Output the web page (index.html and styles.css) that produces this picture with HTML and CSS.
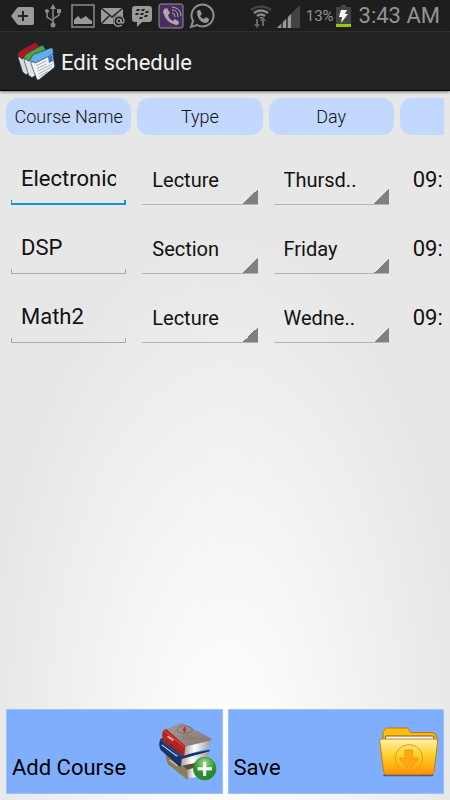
FILE: index.html
```html
<!DOCTYPE html>
<html lang="en">
<head>
    <meta charset="UTF-8">
    <meta name="viewport" content="width=device-width, initial-scale=1.0">
    <title>Edit schedule</title>
    <link rel="stylesheet" href="styles.css">
</head>
<body>
    <div class="status-bar">
        <div class="notifications">
            <svg width="24" height="24" viewBox="0 0 24 24"><path fill="#9a9a9a" d="M0 12 6 4q1-1 2-1h13q2 0 2 2v14q0 2-2 2H8q-1 0-2-1z"/><path stroke="#222" stroke-width="2" d="M7 12h10M12 7v10"/></svg>
            <svg width="16" height="24" viewBox="0 0 16 24"><g fill="none" stroke="#8a8a8a" stroke-width="1.5"><path d="M8 3v18M8 17l-6-4V8M8 15l6-4V8"/></g><g fill="#8a8a8a"><path d="m8 0 3 5H5zM12 5h4v4h-4z"/><circle cx="2" cy="7" r="2"/><circle cx="8" cy="21" r="2.5"/></g></svg>
            <svg width="24" height="24" viewBox="0 0 24 24"><path fill="none" stroke="#8a8a8a" stroke-width="1.5" d="M1 1h22v22H1z"/><path fill="#9a9a9a" d="M3 20v-4l4-4 3 3 5-3 3 3 3 2v3z"/></svg>
            <svg width="26" height="24" viewBox="0 0 26 24"><path fill="#9a9a9a" d="M1 4h22v16H1z"/><path fill="none" stroke="#222" stroke-width="1.5" d="m1 4 11 9L23 4M1 20l8-8M23 20l-8-8"/><circle cx="19" cy="17" r="6" fill="#222"/><g fill="none" stroke="#9a9a9a" stroke-width="1.3"><circle cx="19" cy="17" r="2"/><path d="M21 15v3q0 1 1 1 2 0 2-2c0-7-10-7-10 0 0 6 5 6 8 4"/></g></svg>
            <svg width="22" height="24" viewBox="0 0 22 24"><path fill="#9a9a9a" d="M4 2h14q3 0 3 3v10q0 3-3 3h-7l-5 5v-5H4q-3 0-3-3V5q0-3 3-3z"/><path fill="#222" d="M6 5h3l-1 2H5zm5 0h3l-1 2h-3zm-6 4h3l-1 2H4zm5 0h3l-1 2H9zm-1 4h3l-1 2H8zm6-6h3l-1 2h-3zm-1 4h3l-1 2h-3z"/></svg>
            <svg width="26" height="26" viewBox="0 0 26 26"><rect x="1" y="1" width="24" height="24" rx="2" fill="#4b2c61" stroke="#9a8fa0"/><path fill="#aaa" d="m6 6 3-1 3 5-2 2q1 4 5 6l2-2 4 3q0 3-3 3Q8 20 5 9z"/><path fill="none" stroke="#aaa" d="M14 10q3 0 3 4M14 7q6 0 6 7M14 4q9 1 9 9"/></svg>
            <svg width="26" height="26" viewBox="0 0 26 26"><path fill="none" stroke="#8f8f8f" stroke-width="2" d="m2 24 2-6A11 11 0 1 1 8 22z"/><path fill="#999" d="m8 8 2-1 1 0 2 4-2 2q2 3 4 3l2-2 3 2q0 4-4 4Q8 18 8 8z"/></svg>
        </div>
        <div class="system">
            <svg class="wifi" width="22" height="24" viewBox="0 0 22 24"><g fill="none" stroke-width="2.5"><path stroke="#444" d="M1 6q10-7 20 0"/><path stroke="#8a8a8a" d="M4 9q7-5 14 0M7 12q4-3 8 0"/></g><path fill="#8a8a8a" d="M9 13h4l-2 2z"/><path fill="#666" d="M6 15h2v5h2l-3 4-3-4h2zM12 22v-5h-2l3-4 3 4h-2v5z"/></svg>
            <svg width="24" height="24" viewBox="0 0 24 24"><path fill="#444" d="M0 24 23 1v23z"/><path fill="#999" d="m0 24 4-4v4zM6 18l3-3v9H6zM11 13l3-3v14h-3z"/></svg>
            <span class="percent">13%</span>
            <svg width="15" height="24" viewBox="0 0 15 24"><path fill="#444" d="M0 3h5V1h5v2h5v17H0z"/><path fill="#90d000" d="M0 20h15v3H0z"/><path fill="#fff" d="M5 6h6l-2 4h3l-7 9 1-6H3z"/></svg>
            <span class="clock">3:43 AM</span>
        </div>
    </div>

    <header class="action-bar">
        <svg width="40" height="40" viewBox="18 21 120 120">
            <g stroke="#1d3a5c" stroke-width="2">
                <path fill="#dcdcdc" d="m24 70 48-30 22 55-46 27-10-8z"/>
                <path fill="#b4151c" d="m21 64 8-12 44-25q6-2 8 2l8 11-53 36q-6-8-15-12z"/>
                <path fill="#e4e4e4" d="m42 78 48-34 22 55-46 32-10-7z"/>
                <path fill="#4fa23c" d="m40 72 8-12 45-25q6-2 8 2l6 10-52 35q-6-8-15-10z"/>
                <path fill="#f2f4f6" d="m62 86 66-28 6 38q0 4-4 7l-43 34q-4 2-7-2z"/>
                <path fill="#5fb0ea" d="m58 80 10-16q2-3 6-4l48-18q6-1 7 4l1 14-54 27q-8-5-18-7z"/>
            </g>
            <path fill="#3878c4" d="m114 69 13-5 2 17-12 6z"/>
            <path stroke="#a5a9ad" stroke-width="3" d="m78 95 30-14M80 104l30-14M83 112l44-22M85 120l40-21M87 128l28-16"/>
        </svg>
        <h1>Edit schedule</h1>
    </header>

    <main class="schedule">
        <table>
            <thead>
                <tr>
                    <th><span>Course Name</span></th>
                    <th><span>Type</span></th>
                    <th><span>Day</span></th>
                    <th><span></span></th>
                </tr>
            </thead>
            <tbody>
                <tr>
                    <td><input class="focused" type="text" value="Electronics" aria-label="Course name"></td>
                    <td><select aria-label="Type"><option>Lecture</option></select></td>
                    <td><select aria-label="Day"><option>Thursd..</option></select></td>
                    <td class="time">09:</td>
                </tr>
                <tr>
                    <td><input type="text" value="DSP" aria-label="Course name"></td>
                    <td><select aria-label="Type"><option>Section</option></select></td>
                    <td><select aria-label="Day"><option>Friday</option></select></td>
                    <td class="time">09:</td>
                </tr>
                <tr>
                    <td><input type="text" value="Math2" aria-label="Course name"></td>
                    <td><select aria-label="Type"><option>Lecture</option></select></td>
                    <td><select aria-label="Day"><option>Wedne..</option></select></td>
                    <td class="time">09:</td>
                </tr>
            </tbody>
        </table>
    </main>

    <footer class="actions">
        <button type="button">
            <span>Add Course</span>
            <svg width="60" height="60" viewBox="21 30 180 180">
                <defs>
                    <linearGradient id="pages" x2="1"><stop stop-color="#a8a29e"/><stop offset=".4" stop-color="#fff"/><stop offset="1" stop-color="#a39d99"/></linearGradient>
                    <linearGradient id="cover" x2="1" y2="1"><stop stop-color="#a89c95"/><stop offset="1" stop-color="#85766f"/></linearGradient>
                    <radialGradient id="plus" cy=".25"><stop stop-color="#a5dc8e"/><stop offset=".6" stop-color="#4fae49"/><stop offset="1" stop-color="#2c8a2c"/></radialGradient>
                </defs>
                <!-- bottom book -->
                <path fill="#8f7b55" d="m47 128 65 42 2 30q-3 2-6 0l-54-43q-7-12-7-29z"/>
                <path fill="url(#pages)" d="m112 172 50-14v34l-48 7z"/>
                <path fill="#5d4c3a" d="m60 130 60 25 40-6v10l-48 14z"/>
                <!-- middle book -->
                <path fill="url(#pages)" d="m92 137 84-20-6 28-78 17z"/>
                <path fill="#15336a" d="M31 82q2-4 8-3l57 51 83-17v5l-84 23-2 22q-3 2-7-1L32 114q-8-15-1-32z"/>
                <path fill="none" stroke="#4470ad" stroke-width="2" d="m32 84 62 51"/>
                <!-- top book -->
                <path fill="url(#pages)" d="m102 105 79-20-3 21-76 25z"/>
                <path fill="url(#cover)" stroke="#74655e" d="M48 54 86 37q10-3 18 1l80 43-3 4-77 18z"/>
                <path fill="#b3261f" d="M39 56q4-6 11-4l56 49-3 30q-3 2-7-1L41 88q-8-15-2-32z"/>
                <path fill="none" stroke="#df776d" stroke-width="2" d="m42 56 60 48"/>
                <path stroke="#7c211d" stroke-width="3" d="m46 86 52 38"/>
                <ellipse cx="104" cy="53" rx="23" ry="11" fill="none" stroke="#6a5c57" stroke-width="2"/>
                <path fill="#c52a24" d="m104 43 5 11-5 9-6-10z"/>
                <path stroke="#766963" stroke-width="2" d="m98 74 18-5M101 80l24-7M112 84l28-8"/>
                <path stroke="#f1dcdc" stroke-width="5" stroke-dasharray="4 1" d="m53 73 17 12"/>
                <path stroke="#dbe4f2" stroke-width="4" stroke-dasharray="4 1" d="m36 99 46 34"/>
                <path stroke="#e2d6a4" stroke-width="4" stroke-dasharray="4 1" d="m59 144 24 18"/>
                <circle cx="164" cy="170" r="34" fill="url(#plus)" stroke="#2f7f36" stroke-width="2"/>
                <path stroke="#fff" stroke-width="9" d="M143 170h43M164 149v43"/>
            </svg>
        </button>
        <button type="button">
            <span>Save</span>
            <svg width="60" height="60" viewBox="24 21 180 180">
                <defs>
                    <linearGradient id="folder" x2="0" y2="1"><stop stop-color="#fff5b5"/><stop offset=".15" stop-color="#ffe680"/><stop offset=".45" stop-color="#ffd02a"/><stop offset=".7" stop-color="#ffb915"/><stop offset="1" stop-color="#ff8f06"/></linearGradient>
                </defs>
                <path stroke="#3c5a8c" stroke-width="5" stroke-linecap="round" d="M42 181h146"/>
                <path fill="#ffbf08" stroke="#c0720a" stroke-width="3" d="M39 100V50l7-9q2-2 5-2h59q4 0 6 4l4 8q1 2 4 2h62q12 0 13 10v40z"/>
                <path fill="#fff" stroke="#75552f" stroke-width="3" d="M47 85V63h144v22z"/>
                <path fill="url(#folder)" stroke="#cf7a08" stroke-width="3" d="M35 72h162q6 0 6 6l-11 92q-1 9-9 9H50q-8 0-9-9L29 78q0-6 6-6z"/>
                <g stroke="#ee970f" stroke-width="3">
                    <circle cx="117" cy="130" r="41" fill="none"/>
                    <path fill="#ffa813" d="M105 105h23v25h18l-29 33-29-33h17z"/>
                </g>
            </svg>
        </button>
    </footer>
</body>
</html>
```
FILE: styles.css
```css
* {
    box-sizing: border-box;
}
body {
    font-family: Roboto, 'Liberation Sans', sans-serif;
    margin: 0;
    min-height: 100vh;
    display: flex;
    flex-direction: column;
    overflow-x: hidden;
    background: radial-gradient(ellipse 53% 66% at 50% 95%, #fefefe, #fafafa 25%, #e7e7e7);
    color: #111;
}
svg {
    display: block;
    flex: none;
}

/* status bar */
.status-bar {
    display: flex;
    justify-content: space-between;
    align-items: center;
    height: 32px;
    padding: 0 10px 0 11px;
    background: #1e1e1e;
    border-bottom: 1px solid #333;
    color: #949494;
}
.notifications {
    display: flex;
    align-items: center;
    gap: 5px;
}
.notifications svg:nth-child(2) {
    margin: 0 5px;
}
.system {
    display: flex;
    align-items: center;
    gap: 2px;
}
.wifi {
    margin-right: 3px;
}
.percent {
    font-size: 15px;
    margin-left: 3px;
}
.clock {
    font-size: 22px;
    margin-left: 6px;
}

/* title */
.action-bar {
    display: flex;
    align-items: center;
    gap: 5px;
    height: 59px;
    padding: 0 16px;
    background: #222;
    border-bottom: 1px solid #000;
    box-shadow: 0 1px 3px rgba(0,0,0,0.5);
    color: #f3f3f3;
}
h1 {
    margin: 0;
    padding-top: 2px;
    font-size: 22px;
    font-weight: 400;
}

/* course table */
.schedule {
    flex: 1;
    margin: 7px 6px 0 0;
    overflow: hidden;
}
table {
    width: 531px;
    table-layout: fixed;
    border-collapse: separate;
    border-spacing: 6px 0;
}
th {
    padding: 0 0 10px;
    font-size: 18px;
    font-weight: 300;
}
th span {
    display: block;
    height: 37px;
    line-height: 38px;
    border-radius: 12px;
    background: #c3d8ff;
}
td {
    height: 69px;
    padding: 0 5px 9px;
    vertical-align: bottom;
}
input,
select {
    display: block;
    width: 100%;
    height: 50px;
    margin: 0;
    border: 0;
    border-radius: 0;
    outline: none;
    color: #111;
    font-family: inherit;
}
input {
    padding: 0 10px 3px;
    font-size: 22px;
    background:
        linear-gradient(#aaa, #aaa) 0 100% / 1px 5px no-repeat,
        linear-gradient(#aaa, #aaa) 100% 100% / 1px 5px no-repeat,
        linear-gradient(#aaa, #aaa) 0 100% / 100% 1px no-repeat;
}
input.focused {
    background:
        linear-gradient(#1296d0, #1296d0) 0 100% / 1px 5px no-repeat,
        linear-gradient(#1296d0, #1296d0) 100% 100% / 2px 5px no-repeat,
        linear-gradient(#1296d0, #1296d0) 0 100% / 100% 2px no-repeat;
}
select {
    appearance: none;
    padding: 0 10px;
    font-size: 20px;
    border-bottom: 1px solid #b4b4b4;
    background: linear-gradient(135deg, transparent 50%, #808080 50%) 100% 100% / 15px 15px no-repeat;
}
.time {
    padding-left: 13px;
    font-size: 22px;
    line-height: 50px;
}

/* bottom buttons */
.actions {
    display: flex;
    gap: 5px;
    padding: 0 6px 6px;
}
.actions button {
    flex: 1;
    display: flex;
    justify-content: space-between;
    align-items: center;
    height: 85px;
    padding: 0 5px;
    border: 1px solid #9cc0fd;
    background: #7faffc;
    color: #000;
    font-family: inherit;
    font-size: 22px;
}
.actions span {
    align-self: flex-end;
    padding-bottom: 13px;
}
```
